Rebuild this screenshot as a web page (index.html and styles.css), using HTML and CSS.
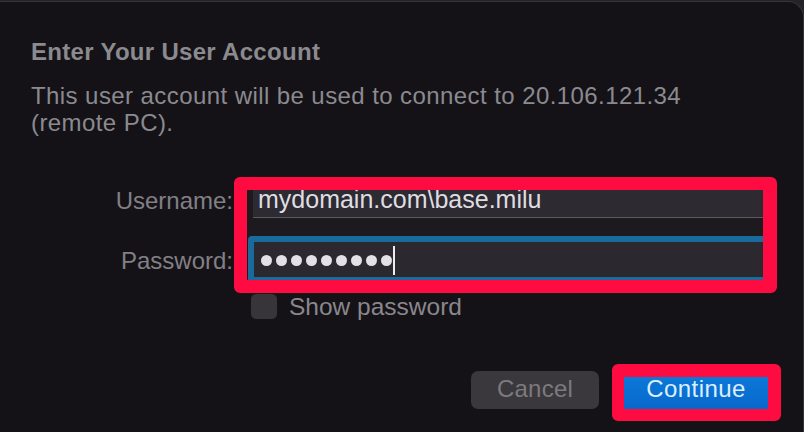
FILE: index.html
```html
<!DOCTYPE html>
<html lang="en">
<head>
<meta charset="utf-8">
<title>Enter Your User Account</title>
<link rel="stylesheet" href="styles.css">
</head>
<body>
<div class="window">
  <h1 class="title">Enter Your User Account</h1>
  <p class="desc">This user account will be used to connect to 20.106.121.34 (remote PC).</p>

  <div class="form">
    <div class="labels">
      <div class="label">Username:</div>
      <div class="label">Password:</div>
    </div>
    <div class="fields-col">
      <div class="mark fields-mark">
        <div class="field user-field">mydomain.com\base.milu</div>
        <div class="focus-ring">
          <div class="field pass-field">
            <span class="dot"></span><span class="dot"></span><span class="dot"></span><span class="dot"></span><span class="dot"></span><span class="dot"></span><span class="dot"></span><span class="dot"></span><span class="dot"></span><span class="caret"></span>
          </div>
        </div>
      </div>
      <label class="check-row">
        <span class="checkbox"></span>
        <span class="check-text">Show password</span>
      </label>
    </div>
  </div>

  <div class="buttons">
    <div class="btn btn-cancel">Cancel</div>
    <div class="mark btn-mark">
      <div class="btn btn-continue">Continue</div>
    </div>
  </div>
</div>
</body>
</html>
```

FILE: styles.css
```css
* { box-sizing: border-box; }

html, body {
  margin: 0;
  padding: 0;
  width: 804px;
  height: 432px;
  overflow: hidden;
  background: #242327;
  font-family: "Liberation Sans", Arial, sans-serif;
}

.window {
  width: 804px;
  height: 432px;
  margin-top: 1px;
  background: #141217;
  border-top: 1px solid #36353a;
  border-right: 1px solid #36353a;
  border-top-right-radius: 16px;
  padding: 35px 0 0 31px;
}

.title {
  margin: 0;
  font-size: 24px;
  font-weight: 700;
  line-height: 30px;
  color: #8b8a8f;
  letter-spacing: 0.3px;
}

.desc {
  margin: 15px 0 0 0;
  max-width: 700px;
  font-size: 24px;
  line-height: 27px;
  color: #8b8a8f;
  letter-spacing: 0.42px;
}

.form {
  display: flex;
  margin-top: 41px;
}

.labels {
  width: 202px;
  padding-top: 9px;
  display: flex;
  flex-direction: column;
  gap: 30px;
}

.label {
  text-align: right;
  font-size: 24px;
  line-height: 30px;
  color: #828085;
}

.fields-col {
  margin-left: 1px;
  display: flex;
  flex-direction: column;
}

.mark {
  border: solid #fe0b41;
  border-radius: 6px;
  overflow: hidden;
}

.fields-mark {
  width: 543px;
  height: 116px;
  border-width: 13px 14px 13px 13px;
  background: #1c191f;
}

.field {
  width: 540px;
  font-size: 25px;
  color: #dedde2;
}

.user-field {
  margin: -8px 0 0 6px;
  height: 36px;
  padding: 3px 0 0 5px;
  line-height: 28px;
  background: #2e2a31;
  border-bottom: 1px solid #5c595f;
}

.focus-ring {
  margin: 18px 0 0 1px;
  width: 560px;
  border: 6px solid #196b9c;
  border-radius: 4px;
}

.pass-field {
  height: 35px;
  background: #2c2830;
  display: flex;
  align-items: center;
  gap: 4px;
  padding: 1px 0 0 7px;
}

.dot {
  width: 11px;
  height: 11px;
  border-radius: 50%;
  background: #e2e1e5;
  margin-top: 1px;
}

.caret {
  width: 2px;
  height: 29px;
  background: #ececee;
  margin-left: -3px;
  margin-top: 1px;
}

.check-row {
  display: flex;
  align-items: center;
  gap: 12px;
  margin: 1px 0 0 17px;
}

.checkbox {
  width: 26px;
  height: 25px;
  border-radius: 5px;
  background: #37343a;
}

.check-text {
  font-size: 24.5px;
  line-height: 25px;
  color: #89878c;
}

.buttons {
  display: flex;
  justify-content: flex-end;
  align-items: flex-start;
  gap: 13px;
  margin-top: 45px;
  padding-right: 22px;
}

.btn {
  font-size: 24px;
  text-align: center;
}

.btn-cancel {
  margin-top: 7px;
  width: 128px;
  height: 38px;
  line-height: 36px;
  border-radius: 7px;
  background: #3a383d;
  color: #7c7a7f;
  letter-spacing: 0.25px;
}

.btn-mark {
  width: 169px;
  height: 57px;
  border-width: 13px 13px 12px 12px;
}

.btn-continue {
  margin-top: -6px;
  height: 38px;
  line-height: 36px;
  background: linear-gradient(#0c7bdb, #0868cb);
  color: #dcefff;
  letter-spacing: 0.4px;
}
```
